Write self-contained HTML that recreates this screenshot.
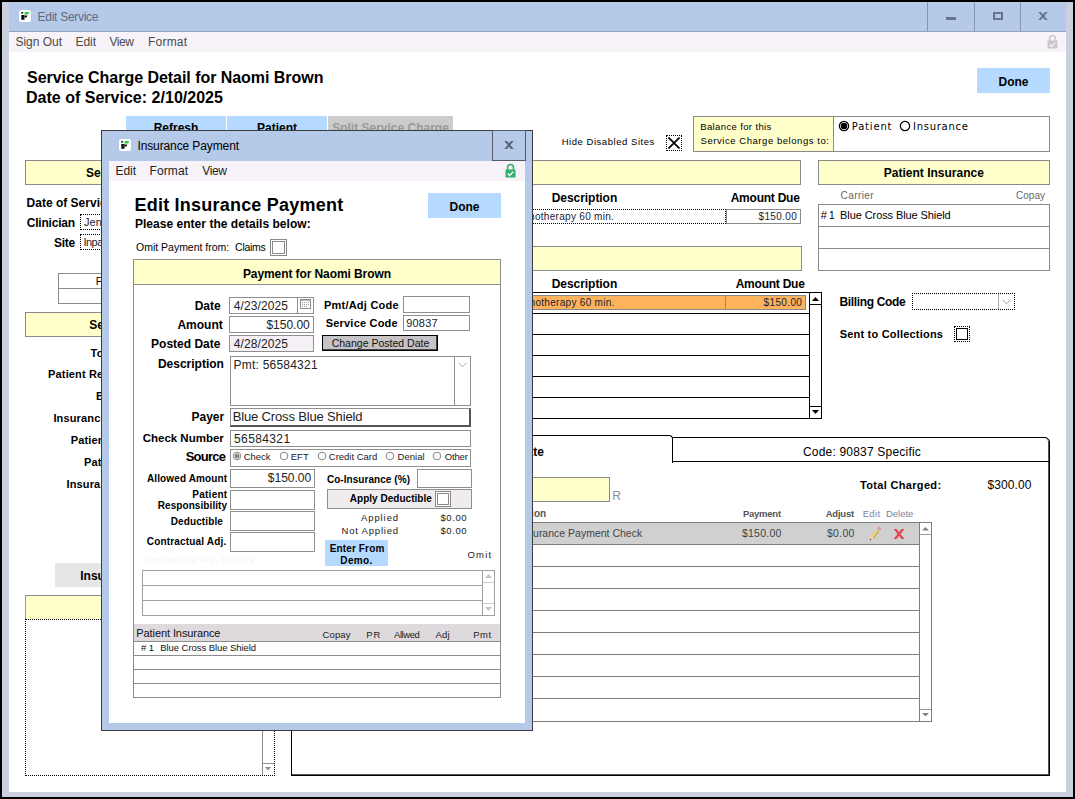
<!DOCTYPE html>
<html><head><meta charset="utf-8"><title>Edit Service</title>
<style>
html,body{margin:0;padding:0}
body{width:1075px;height:799px;position:relative;overflow:hidden;background:#000}
body>div{position:absolute}
.a{position:absolute}
.t{white-space:nowrap}
</style></head><body>
<div style="left:0px;top:0px;width:1075px;height:799px;background:#000"></div>
<div style="left:2px;top:2px;width:1071px;height:795px;background:#cbd0de"></div>
<div style="left:9px;top:2px;width:1057px;height:30px;background:#b5c9e8;border-bottom:1px solid #93a3c0;box-sizing:border-box"></div>
<div style="left:9px;top:32px;width:1057px;height:20px;background:#f8f3f8"></div>
<div style="left:9px;top:52px;width:1057px;height:740px;background:#fff"></div>
<svg class="a" style="left:19px;top:10px" width="12" height="12" viewBox="0 0 12 12"><rect width="12" height="12" rx="2.5" fill="#fff"/><path d="M2.3 2h2.2l-0.9 1.7h-1.3z" fill="#111"/><path d="M2.3 5h3.2v4.8h-3.2z" fill="#111"/><path d="M5.5 5.5h2.9l-0.9 2h-2z" fill="#111"/><path d="M5.9 1.9h4.4l-1.3 2.7h-3.6z" fill="#1fce3f"/></svg>
<div class="t" style="font:12px/16px 'Liberation Sans',sans-serif;color:#5f6b85;letter-spacing:-0.277px;left:37.54px;top:9.00px;">Edit Service</div>
<div style="left:927px;top:2px;width:1px;height:29px;background:#8797b3"></div>
<div style="left:974px;top:2px;width:1px;height:29px;background:#8797b3"></div>
<div style="left:1020px;top:2px;width:1px;height:29px;background:#8797b3"></div>
<div style="left:946px;top:17px;width:10px;height:3px;background:#65748f"></div>
<div style="left:993px;top:12px;width:10px;height:8px;border:2px solid #65748f;border-top-width:2px;box-sizing:border-box"></div>
<svg class="a" style="left:1035.4px;top:8px" width="16" height="16" viewBox="-8 -8 16 16"><clipPath id="xc1"><rect x="-8" y="-4" width="16" height="8"/></clipPath><path clip-path="url(#xc1)" d="M-5.10 -6.00L5.10 6.00M5.10 -6.00L-5.10 6.00" stroke="#65748f" stroke-width="2.0" fill="none"/></svg>
<svg class="a" style="left:1046.6px;top:34px" width="11" height="15" viewBox="0 0 11 15"><path d="M2.6 7V4.4a2.9 2.9 0 0 1 5.8 0V7" fill="none" stroke="#c9c9c9" stroke-width="1.6"/><rect x="0.5" y="6.5" width="10" height="8" fill="#c9c9c9"/><path d="M2.8 10.6l1.8 1.8 3.6-3.6" fill="none" stroke="#f4f0f4" stroke-width="1.4"/></svg>
<div class="t" style="font:12px/16px 'Liberation Sans',sans-serif;color:#4a4a4a;letter-spacing:-0.011px;left:15.46px;top:34.00px;">Sign Out</div>
<div class="t" style="font:12px/16px 'Liberation Sans',sans-serif;color:#4a4a4a;letter-spacing:-0.050px;left:75.54px;top:34.00px;">Edit</div>
<div class="t" style="font:12px/16px 'Liberation Sans',sans-serif;color:#4a4a4a;letter-spacing:-0.433px;left:109.47px;top:34.00px;">View</div>
<div class="t" style="font:12px/16px 'Liberation Sans',sans-serif;color:#4a4a4a;letter-spacing:0.202px;left:148.04px;top:34.00px;">Format</div>
<div class="t" style="font:bold 16px/19px 'Liberation Sans',sans-serif;color:#000;letter-spacing:-0.040px;left:27.06px;top:68.00px;">Service Charge Detail for Naomi Brown</div>
<div class="t" style="font:bold 16px/19px 'Liberation Sans',sans-serif;color:#000;letter-spacing:0.015px;left:25.96px;top:88.00px;">Date of Service: 2/10/2025</div>
<div style="left:977px;top:68px;width:73px;height:25px;background:#b5d9ff"></div>
<div class="t" style="font:bold 12px/16px 'Liberation Sans',sans-serif;color:#000;left:983.50px;width:60px;text-align:center;top:74.00px;">Done</div>
<div style="left:126px;top:116px;width:100px;height:26px;background:#b5d9ff"></div>
<div style="left:227px;top:116px;width:100px;height:26px;background:#b5d9ff"></div>
<div style="left:328px;top:116px;width:125px;height:26px;background:#ccc"></div>
<div class="t" style="font:bold 12px/16px 'Liberation Sans',sans-serif;color:#000;left:131.00px;width:90px;text-align:center;top:120.00px;">Refresh</div>
<div class="t" style="font:bold 12px/16px 'Liberation Sans',sans-serif;color:#000;left:232.00px;width:90px;text-align:center;top:120.00px;">Patient</div>
<div class="t" style="font:bold 12px/16px 'Liberation Sans',sans-serif;color:#999;left:328.50px;width:124px;text-align:center;top:120.00px;">Split Service Charge</div>
<div class="t" style="font:9.5px/13px 'Liberation Sans',sans-serif;color:#000;letter-spacing:0.543px;left:561.64px;top:135.00px;">Hide Disabled Sites</div>
<div style="left:666px;top:135px;width:16px;height:16px;border:1px dotted #000;box-sizing:border-box"></div>
<svg class="a" style="left:668px;top:137px" width="12" height="12" viewBox="0 0 12 12"><path d="M0.5 0.5L11.5 11.5M11.5 0.5L0.5 11.5" stroke="#000" stroke-width="1.7"/></svg>
<div style="left:693px;top:116px;width:357px;height:36px;border:1px solid #8a8a8a;box-sizing:border-box;background:#fff"></div>
<div style="left:694px;top:117px;width:140px;height:34px;background:#ffffcc;border-right:1px solid #8a8a8a;box-sizing:border-box"></div>
<div class="t" style="font:9.5px/13px 'Liberation Sans',sans-serif;color:#000;letter-spacing:0.374px;left:700.24px;top:120.00px;">Balance for this</div>
<div class="t" style="font:9.5px/13px 'Liberation Sans',sans-serif;color:#000;letter-spacing:0.548px;left:700.57px;top:134.00px;">Service Charge belongs to:</div>
<svg class="a" style="left:837.1px;top:118.9px" width="14" height="14" viewBox="-7 -7 14 14"><circle cx="0" cy="0" r="4.65" fill="#fff" stroke="#000" stroke-width="1.2"/><circle cx="0" cy="0" r="3.3" fill="#000"/></svg>
<svg class="a" style="left:897.9px;top:118.9px" width="14" height="14" viewBox="-7 -7 14 14"><circle cx="0" cy="0" r="4.65" fill="#fff" stroke="#000" stroke-width="1.2"/></svg>
<div class="t" style="font:10px/13px 'DejaVu Sans',sans-serif;color:#000;letter-spacing:0.829px;left:851.73px;top:120.00px;">Patient</div>
<div class="t" style="font:10px/13px 'DejaVu Sans',sans-serif;color:#000;letter-spacing:0.719px;left:913.02px;top:120.00px;">Insurance</div>
<div style="left:25px;top:160px;width:380px;height:25px;background:#ffffcc;border:1px solid #8a8a8a;box-sizing:border-box;"></div>
<div class="t" style="font:bold 12px/16px 'Liberation Sans',sans-serif;color:#000;left:86.07px;top:165.00px;">Service Details</div>
<div style="left:404px;top:160px;width:397px;height:25px;background:#ffffcc;border:1px solid #8a8a8a;box-sizing:border-box;"></div>
<div style="left:818px;top:160px;width:232px;height:25px;background:#ffffcc;border:1px solid #8a8a8a;box-sizing:border-box;"></div>
<div class="t" style="font:bold 12px/16px 'Liberation Sans',sans-serif;color:#000;letter-spacing:0.009px;left:883.72px;top:165.00px;">Patient Insurance</div>
<div class="t" style="font:bold 12px/16px 'Liberation Sans',sans-serif;color:#000;left:26.62px;top:195.00px;">Date of Service</div>
<div class="t" style="font:bold 12px/16px 'Liberation Sans',sans-serif;color:#000;letter-spacing:-0.226px;left:26.82px;top:215.00px;">Clinician</div>
<div style="left:80px;top:214px;width:150px;height:16px;border:1px dotted #000;box-sizing:border-box"></div>
<div class="t" style="font:11px/14px 'Liberation Sans',sans-serif;color:#223;left:84.03px;top:215.00px;">Jennifer Adams</div>
<div class="t" style="font:bold 12px/16px 'Liberation Sans',sans-serif;color:#000;letter-spacing:-0.257px;left:53.97px;top:235.00px;">Site</div>
<div style="left:80px;top:234px;width:150px;height:16px;border:1px dotted #000;box-sizing:border-box"></div>
<div class="t" style="font:11px/14px 'Liberation Sans',sans-serif;color:#223;letter-spacing:-0.500px;left:83.41px;top:235.00px;">Inpatient Facility</div>
<div style="left:58px;top:273px;width:200px;height:31px;border:1px solid #8a8a8a;box-sizing:border-box"></div>
<div style="left:58px;top:288px;width:200px;height:1px;background:#8a8a8a"></div>
<div class="t" style="font:10.5px/14px 'Liberation Sans',sans-serif;color:#000;left:95.86px;top:274.00px;">Fee</div>
<div style="left:25px;top:312px;width:380px;height:25px;background:#ffffcc;border:1px solid #8a8a8a;box-sizing:border-box;"></div>
<div class="t" style="font:bold 12px/16px 'Liberation Sans',sans-serif;color:#000;left:89.37px;top:317.00px;">Service Charge Balance</div>
<div class="t" style="font:bold 11px/14px 'Liberation Sans',sans-serif;color:#000;letter-spacing:0.150px;left:90.59px;top:346.00px;">Total Charged</div>
<div class="t" style="font:bold 11px/14px 'Liberation Sans',sans-serif;color:#000;letter-spacing:0.150px;left:48.08px;top:367.00px;">Patient Responsibility</div>
<div class="t" style="font:bold 11px/14px 'Liberation Sans',sans-serif;color:#000;letter-spacing:0.150px;left:95.98px;top:389.00px;">Balance</div>
<div class="t" style="font:bold 11px/14px 'Liberation Sans',sans-serif;color:#000;letter-spacing:0.150px;left:53.38px;top:411.00px;">Insurance Payments</div>
<div class="t" style="font:bold 11px/14px 'Liberation Sans',sans-serif;color:#000;letter-spacing:0.150px;left:70.78px;top:433.00px;">Patient Payments</div>
<div class="t" style="font:bold 11px/14px 'Liberation Sans',sans-serif;color:#000;letter-spacing:0.150px;left:83.98px;top:455.00px;">Patient Adjustments</div>
<div class="t" style="font:bold 11px/14px 'Liberation Sans',sans-serif;color:#000;letter-spacing:0.150px;left:66.48px;top:477.00px;">Insurance Adjustments</div>
<div style="left:55px;top:563px;width:150px;height:24px;background:#e6e6e6"></div>
<div class="t" style="font:bold 12px/16px 'Liberation Sans',sans-serif;color:#000;left:80.22px;top:568.00px;">Insurance Claims</div>
<div style="left:25px;top:595px;width:250px;height:25px;background:#ffffcc;border:1px solid #8a8a8a;box-sizing:border-box;border-bottom:1px dotted #000;border-left-color:#999;border-right-color:#999;"></div>
<div style="left:25px;top:619px;width:250px;height:157px;border:1px dotted #000;box-sizing:border-box"></div>
<div style="left:262px;top:620px;width:1px;height:155px;background:#8c8c8c"></div>
<div style="left:263px;top:763px;width:11px;height:1px;background:#8c8c8c"></div>
<svg class="a" style="left:265px;top:767.3px" width="6" height="4" viewBox="0 0 6 4"><path d="M0 0L3 3.6L6 0z" fill="#8a8a8a"/></svg>
<div class="t" style="font:bold 12px/16px 'Liberation Sans',sans-serif;color:#000;letter-spacing:-0.050px;left:551.72px;top:190.00px;">Description</div>
<div class="t" style="font:bold 12px/16px 'Liberation Sans',sans-serif;color:#000;letter-spacing:-0.236px;left:730.70px;top:190.00px;">Amount Due</div>
<div style="left:404px;top:209px;width:322px;height:15px;border:1px dotted #000;box-sizing:border-box"></div>
<div class="t" style="font:10px/13px 'Liberation Sans',sans-serif;color:#223;letter-spacing:0.300px;right:460.80px;text-align:right;top:210.00px;">Psychotherapy 60 min.</div>
<div style="left:726px;top:209px;width:75px;height:15px;border:1px solid #8a8a8a;box-sizing:border-box"></div>
<div class="t" style="font:10px/13px 'Liberation Sans',sans-serif;color:#223;letter-spacing:0.325px;left:758.60px;top:210.00px;">$150.00</div>
<div style="left:404px;top:246px;width:398px;height:25px;background:#ffffcc;border:1px solid #8a8a8a;box-sizing:border-box;"></div>
<div class="t" style="font:bold 12px/16px 'Liberation Sans',sans-serif;color:#000;letter-spacing:-0.050px;left:551.72px;top:276.00px;">Description</div>
<div class="t" style="font:bold 12px/16px 'Liberation Sans',sans-serif;color:#000;letter-spacing:-0.236px;left:735.70px;top:276.00px;">Amount Due</div>
<div style="left:404px;top:292px;width:418px;height:127px;border:1px solid #000;box-sizing:border-box;background:#fff"></div>
<div style="left:404px;top:313px;width:406px;height:1px;background:#000"></div>
<div style="left:404px;top:334px;width:406px;height:1px;background:#000"></div>
<div style="left:404px;top:355px;width:406px;height:1px;background:#000"></div>
<div style="left:404px;top:376px;width:406px;height:1px;background:#000"></div>
<div style="left:404px;top:397px;width:406px;height:1px;background:#000"></div>
<div style="left:809px;top:292px;width:1px;height:127px;background:#000"></div>
<div style="left:809px;top:304px;width:13px;height:1px;background:#000"></div>
<div style="left:809px;top:406px;width:13px;height:1px;background:#000"></div>
<svg class="a" style="left:811.5px;top:297px" width="7" height="4" viewBox="0 0 7 4"><path d="M0 4L3.5 0L7 4z" fill="#000"/></svg>
<svg class="a" style="left:811.5px;top:410px" width="7" height="4" viewBox="0 0 7 4"><path d="M0 0L3.5 4L7 0z" fill="#000"/></svg>
<div style="left:404px;top:295px;width:322px;height:15px;background:#fdb25c;border:1px solid #8a8a8a;box-sizing:border-box"></div>
<div style="left:725px;top:295px;width:81px;height:15px;background:#fdb25c;border:1px solid #8a8a8a;box-sizing:border-box"></div>
<div class="t" style="font:10px/13px 'Liberation Sans',sans-serif;color:#223;letter-spacing:0.300px;right:460.30px;text-align:right;top:296.00px;">Psychotherapy 60 min.</div>
<div class="t" style="font:10px/13px 'Liberation Sans',sans-serif;color:#223;letter-spacing:0.358px;left:763.60px;top:296.00px;">$150.00</div>
<div class="t" style="font:10px/13px 'Liberation Sans',sans-serif;color:#666;letter-spacing:0.433px;left:840.50px;top:189.00px;">Carrier</div>
<div class="t" style="font:10px/13px 'Liberation Sans',sans-serif;color:#666;letter-spacing:0.025px;left:1016.00px;top:189.00px;">Copay</div>
<div style="left:818px;top:204px;width:232px;height:67px;border:1px solid #8a8a8a;box-sizing:border-box"></div>
<div style="left:818px;top:226px;width:232px;height:1px;background:#8a8a8a"></div>
<div style="left:818px;top:248px;width:232px;height:1px;background:#8a8a8a"></div>
<div class="t" style="font:11px/14px 'Liberation Sans',sans-serif;color:#000;left:820.67px;top:208.00px;">#</div>
<div class="t" style="font:11px/14px 'Liberation Sans',sans-serif;color:#000;left:828.77px;top:208.00px;">1</div>
<div class="t" style="font:11px/14px 'Liberation Sans',sans-serif;color:#000;letter-spacing:-0.092px;left:840.12px;top:208.00px;">Blue Cross Blue Shield</div>
<div class="t" style="font:bold 12px/16px 'Liberation Sans',sans-serif;color:#000;letter-spacing:-0.329px;left:839.42px;top:294.00px;">Billing Code</div>
<div style="left:912px;top:293px;width:103px;height:17px;border:1px dotted #000;box-sizing:border-box"></div>
<div style="left:998px;top:294px;width:1px;height:15px;background:#aaa"></div>
<svg class="a" style="left:1002px;top:299px" width="9" height="6" viewBox="0 0 9 6"><path d="M0.5 0.8L4.5 4.8L8.5 0.8" fill="none" stroke="#999" stroke-width="1"/></svg>
<div class="t" style="font:bold 11px/14px 'Liberation Sans',sans-serif;color:#000;letter-spacing:0.201px;left:839.70px;top:327.00px;">Sent to Collections</div>
<div style="left:954px;top:326px;width:16px;height:16px;border:1px dotted #000;box-sizing:border-box"></div>
<div style="left:956px;top:328px;width:12px;height:12px;border:1px solid #000;box-sizing:border-box"></div>
<div style="left:291px;top:461px;width:759px;height:315px;border:1px solid #000;box-shadow:inset -1px -1px 0 0 #555;box-sizing:border-box;background:#fff"></div>
<div style="left:291px;top:435px;width:382px;height:28px;border:1px solid #000;border-bottom:none;border-radius:4px 4px 0 0;box-sizing:border-box;background:#fff"></div>
<div style="left:672px;top:437px;width:378px;height:25px;border:1px solid #000;box-shadow:inset -1px 0 0 0 #555;border-radius:0 5px 0 0;box-sizing:border-box;background:#fff"></div>
<div class="t" style="font:bold 12px/16px 'Liberation Sans',sans-serif;color:#000;right:531.18px;text-align:right;top:444.00px;">Payments and Adjustments to Date</div>
<div class="t" style="font:12px/16px 'Liberation Sans',sans-serif;color:#000;letter-spacing:0.201px;left:802.90px;top:444.00px;">Code: 90837 Specific</div>
<div style="left:430px;top:477px;width:180px;height:25px;background:#ffffcc;border:1px solid #8a8a8a;box-sizing:border-box"></div>
<div class="t" style="font:12px/16px 'Liberation Sans',sans-serif;color:#8a90a0;left:612.24px;top:488.00px;">R</div>
<div class="t" style="font:bold 11px/14px 'Liberation Sans',sans-serif;color:#000;letter-spacing:0.321px;left:860.09px;top:478.00px;">Total Charged:</div>
<div class="t" style="font:12px/16px 'Liberation Sans',sans-serif;color:#000;letter-spacing:0.120px;left:987.38px;top:477.00px;">$300.00</div>
<div class="t" style="font:bold 10px/13px 'Liberation Sans',sans-serif;color:#555;right:528.89px;text-align:right;top:507.00px;">Description</div>
<div class="t" style="font:bold 9.5px/13px 'Liberation Sans',sans-serif;color:#555;letter-spacing:-0.230px;left:742.88px;top:507.00px;">Payment</div>
<div class="t" style="font:bold 9.5px/13px 'Liberation Sans',sans-serif;color:#555;letter-spacing:-0.242px;left:825.76px;top:507.00px;">Adjust</div>
<div class="t" style="font:9.5px/13px 'Liberation Sans',sans-serif;color:#7a86a0;letter-spacing:0.348px;left:862.64px;top:507.00px;">Edit</div>
<div class="t" style="font:9.5px/13px 'Liberation Sans',sans-serif;color:#7a86a0;left:885.94px;top:507.00px;">Delete</div>
<div style="left:300px;top:522px;width:632px;height:200px;border:1px solid #7f7f7f;box-sizing:border-box;background:#fff"></div>
<div style="left:301px;top:523px;width:618px;height:21px;background:#d0d0d0"></div>
<div style="left:300px;top:544px;width:620px;height:1px;background:#7f7f7f"></div>
<div style="left:300px;top:566px;width:620px;height:1px;background:#7f7f7f"></div>
<div style="left:300px;top:588px;width:620px;height:1px;background:#7f7f7f"></div>
<div style="left:300px;top:610px;width:620px;height:1px;background:#7f7f7f"></div>
<div style="left:300px;top:632px;width:620px;height:1px;background:#7f7f7f"></div>
<div style="left:300px;top:654px;width:620px;height:1px;background:#7f7f7f"></div>
<div style="left:300px;top:676px;width:620px;height:1px;background:#7f7f7f"></div>
<div style="left:300px;top:698px;width:620px;height:1px;background:#7f7f7f"></div>
<div style="left:919px;top:522px;width:1px;height:200px;background:#7f7f7f"></div>
<div style="left:920px;top:534px;width:11px;height:1px;background:#999"></div>
<div style="left:920px;top:709px;width:11px;height:1px;background:#999"></div>
<svg class="a" style="left:922px;top:527.3px" width="7" height="4" viewBox="0 0 7 4"><path d="M0 3.6L3.5 0L7 3.6z" fill="#808080"/></svg>
<svg class="a" style="left:922px;top:713.2px" width="7" height="4" viewBox="0 0 7 4"><path d="M0 0L3.5 3.6L7 0z" fill="#808080"/></svg>
<div class="t" style="font:10.5px/14px 'Liberation Sans',sans-serif;color:#444;right:432.82px;text-align:right;top:526.00px;">Insurance Payment Check</div>
<div class="t" style="font:10.5px/14px 'Liberation Sans',sans-serif;color:#444;letter-spacing:0.261px;left:741.89px;top:526.00px;">$150.00</div>
<div class="t" style="font:10.5px/14px 'Liberation Sans',sans-serif;color:#444;letter-spacing:0.306px;left:826.89px;top:526.00px;">$0.00</div>
<svg class="a" style="left:866.5px;top:525.9px" width="16" height="16" viewBox="-8 -8 16 16"><g transform="rotate(38)"><rect x="-2" y="-8.2" width="4" height="2.2" rx="0.8" fill="#e8948c"/><rect x="-2" y="-6.2" width="4" height="1.6" fill="#b9b9b9"/><rect x="-2" y="-4.6" width="4" height="9" fill="#e9cf86"/><rect x="0.7" y="-4.6" width="1.3" height="9" fill="#c7a85c"/><path d="M-2 4.4h4l-2 3.9z" fill="#ead9b0"/><path d="M-0.8 6.8h1.6l-0.8 1.6z" fill="#333"/></g></svg>
<svg class="a" style="left:891.2px;top:526.2px" width="16" height="16" viewBox="-8 -8 16 16"><clipPath id="xc2"><rect x="-8" y="-4.9" width="16" height="9.8"/></clipPath><path clip-path="url(#xc2)" d="M-5.49 -6.90L5.49 6.90M5.49 -6.90L-5.49 6.90" stroke="#e2454b" stroke-width="2.3" fill="none"/></svg>
<div style="left:101px;top:130px;width:432px;height:601px;background:#b5c9e8;border:1px solid #3c3c3c;box-sizing:border-box"></div>
<div style="left:109px;top:161px;width:416px;height:20px;background:#f8f3f8"></div>
<div style="left:109px;top:181px;width:416px;height:542px;background:#fff"></div>
<svg class="a" style="left:119px;top:139px" width="12" height="12" viewBox="0 0 12 12"><rect width="12" height="12" rx="2.5" fill="#fff"/><path d="M2.3 2h2.2l-0.9 1.7h-1.3z" fill="#111"/><path d="M2.3 5h3.2v4.8h-3.2z" fill="#111"/><path d="M5.5 5.5h2.9l-0.9 2h-2z" fill="#111"/><path d="M5.9 1.9h4.4l-1.3 2.7h-3.6z" fill="#1fce3f"/></svg>
<div class="t" style="font:12px/16px 'Liberation Sans',sans-serif;color:#000;letter-spacing:-0.109px;left:137.42px;top:138.00px;">Insurance Payment</div>
<div style="left:492px;top:130px;width:34px;height:31px;border:1px solid #555c66;box-sizing:border-box"></div>
<svg class="a" style="left:501.0px;top:136.9px" width="16" height="16" viewBox="-8 -8 16 16"><clipPath id="xc3"><rect x="-8" y="-4.1" width="16" height="8.2"/></clipPath><path clip-path="url(#xc3)" d="M-5.06 -6.10L5.06 6.10M5.06 -6.10L-5.06 6.10" stroke="#555f70" stroke-width="2.0" fill="none"/></svg>
<div class="t" style="font:12px/16px 'Liberation Sans',sans-serif;color:#222;letter-spacing:-0.050px;left:115.54px;top:163.00px;">Edit</div>
<div class="t" style="font:12px/16px 'Liberation Sans',sans-serif;color:#222;letter-spacing:0.102px;left:149.54px;top:163.00px;">Format</div>
<div class="t" style="font:12px/16px 'Liberation Sans',sans-serif;color:#222;letter-spacing:-0.367px;left:202.27px;top:163.00px;">View</div>
<svg class="a" style="left:504.8px;top:162.7px" width="11" height="15" viewBox="0 0 11 15"><path d="M2.6 7V4.4a2.9 2.9 0 0 1 5.8 0V7" fill="none" stroke="#30b26e" stroke-width="1.6"/><rect x="0.5" y="6.5" width="10" height="8" fill="#30b26e"/><path d="M2.8 10.6l1.8 1.8 3.6-3.6" fill="none" stroke="#fff" stroke-width="1.4"/></svg>
<div class="t" style="font:bold 18px/22px 'Liberation Sans',sans-serif;color:#000;letter-spacing:0.218px;left:134.53px;top:194.00px;">Edit Insurance Payment</div>
<div class="t" style="font:bold 12px/16px 'Liberation Sans',sans-serif;color:#000;letter-spacing:0.033px;left:134.92px;top:216.00px;">Please enter the details below:</div>
<div style="left:428px;top:193px;width:73px;height:25px;background:#b5d9ff"></div>
<div class="t" style="font:bold 12px/16px 'Liberation Sans',sans-serif;color:#000;left:434.50px;width:60px;text-align:center;top:199.00px;">Done</div>
<div class="t" style="font:10.5px/14px 'Liberation Sans',sans-serif;color:#000;letter-spacing:-0.007px;left:136.03px;top:240.00px;">Omit Payment from:</div>
<div class="t" style="font:10.5px/14px 'Liberation Sans',sans-serif;color:#000;letter-spacing:-0.257px;left:235.07px;top:240.00px;">Claims</div>
<div style="left:270px;top:239px;width:17px;height:17px;border:1px solid #8a8a8a;box-sizing:border-box;background:#fff"></div>
<div style="left:272px;top:241px;width:13px;height:13px;border:1px solid #8a8a8a;box-sizing:border-box;background:#fff"></div>
<div style="left:133px;top:259px;width:368px;height:439px;border:1px solid #8c8c8c;box-sizing:border-box;background:#fff"></div>
<div style="left:134px;top:260px;width:366px;height:24px;background:#ffffcc;border-bottom:1px solid #8c8c8c"></div>
<div class="t" style="font:bold 12px/16px 'Liberation Sans',sans-serif;color:#000;letter-spacing:-0.088px;left:242.92px;top:266.00px;">Payment for Naomi Brown</div>
<div class="t" style="font:bold 12px/16px 'Liberation Sans',sans-serif;color:#000;right:854.31px;text-align:right;top:298.00px;">Date</div>
<div style="left:229px;top:297px;width:85px;height:17px;border:1px solid #8f8f8f;box-sizing:border-box;background:#fff;"></div>
<div style="left:297px;top:298px;width:1px;height:15px;background:#8f8f8f"></div>
<div class="t" style="font:12px/16px 'Liberation Sans',sans-serif;color:#222;letter-spacing:0.110px;left:233.73px;top:298.00px;">4/23/2025</div>
<svg class="a" style="left:300px;top:299px" width="11" height="10" viewBox="0 0 11 10"><rect x="0.5" y="0.5" width="10" height="9" fill="#fff" stroke="#8a8a8a"/><rect x="0" y="0" width="11" height="1.6" fill="#8a8a8a"/><g fill="#9a9a9a"><rect x="2" y="3" width="1" height="1"/><rect x="4" y="3" width="1" height="1"/><rect x="6" y="3" width="1" height="1"/><rect x="8" y="3" width="1" height="1"/><rect x="2" y="5" width="1" height="1"/><rect x="4" y="5" width="1" height="1"/><rect x="6" y="5" width="1" height="1"/><rect x="8" y="5" width="1" height="1"/><rect x="2" y="7" width="1" height="1"/><rect x="4" y="7" width="1" height="1"/><rect x="6" y="7" width="1" height="1"/></g></svg>
<div class="t" style="font:bold 12px/16px 'Liberation Sans',sans-serif;color:#000;right:852.29px;text-align:right;top:317.00px;">Amount</div>
<div style="left:229px;top:316px;width:85px;height:17px;border:1px solid #8f8f8f;box-sizing:border-box;background:#fff;"></div>
<div class="t" style="font:12px/16px 'Liberation Sans',sans-serif;color:#222;right:765.22px;text-align:right;top:317.00px;">$150.00</div>
<div class="t" style="font:bold 12px/16px 'Liberation Sans',sans-serif;color:#000;right:854.59px;text-align:right;top:336.00px;">Posted Date</div>
<div style="left:229px;top:335px;width:85px;height:17px;border:1px solid #8f8f8f;box-sizing:border-box;background:#f5f0f5;"></div>
<div class="t" style="font:12px/16px 'Liberation Sans',sans-serif;color:#222;letter-spacing:0.110px;left:233.73px;top:336.00px;">4/28/2025</div>
<div class="t" style="font:bold 12px/16px 'Liberation Sans',sans-serif;color:#000;right:851.07px;text-align:right;top:356.00px;">Description</div>
<div style="left:230px;top:356px;width:241px;height:50px;border:1px solid #8f8f8f;box-sizing:border-box;background:#fff;"></div>
<div style="left:454px;top:357px;width:1px;height:48px;background:#8f8f8f"></div>
<svg class="a" style="left:458px;top:362px" width="9" height="6" viewBox="0 0 9 6"><path d="M0.5 0.8L4.5 4.8L8.5 0.8" fill="none" stroke="#aaa" stroke-width="1"/></svg>
<div class="t" style="font:12px/16px 'Liberation Sans',sans-serif;color:#222;letter-spacing:0.220px;left:233.54px;top:357.00px;">Pmt: 56584321</div>
<div class="t" style="font:bold 11px/14px 'Liberation Sans',sans-serif;color:#000;letter-spacing:0.242px;left:323.89px;top:298.00px;">Pmt/Adj Code</div>
<div style="left:403px;top:296px;width:67px;height:17px;border:1px solid #8f8f8f;box-sizing:border-box;background:#fff;"></div>
<div class="t" style="font:bold 11px/14px 'Liberation Sans',sans-serif;color:#000;letter-spacing:0.207px;left:325.70px;top:316.00px;">Service Code</div>
<div style="left:403px;top:315px;width:67px;height:16px;border:1px solid #8f8f8f;box-sizing:border-box;background:#fff;"></div>
<div class="t" style="font:11px/14px 'Liberation Sans',sans-serif;color:#222;letter-spacing:0.159px;left:406.31px;top:316.00px;">90837</div>
<div style="left:322px;top:335px;width:116px;height:16px;border:1px solid #000;box-shadow:inset -1px -1px 0 0 #444;box-sizing:border-box;background:#c6c3c6"></div>
<div class="t" style="font:10.5px/14px 'Liberation Sans',sans-serif;color:#111;letter-spacing:0.006px;left:331.68px;top:336.00px;">Change Posted Date</div>
<div class="t" style="font:bold 12px/16px 'Liberation Sans',sans-serif;color:#000;right:850.82px;text-align:right;top:409.00px;">Payer</div>
<div style="left:230px;top:408px;width:241px;height:19px;border:1px solid #8f8f8f;box-sizing:border-box;background:#fff;border-right:2px solid #555;border-bottom:2px solid #555;"></div>
<div class="t" style="font:13px/17px 'Liberation Sans',sans-serif;color:#222;letter-spacing:-0.157px;left:232.76px;top:408.00px;">Blue Cross Blue Shield</div>
<div class="t" style="font:bold 11.5px/14px 'Liberation Sans',sans-serif;color:#000;letter-spacing:-0.012px;left:142.74px;top:431.00px;">Check Number</div>
<div style="left:230px;top:430px;width:241px;height:17px;border:1px solid #8f8f8f;box-sizing:border-box;background:#fff;"></div>
<div class="t" style="font:12px/16px 'Liberation Sans',sans-serif;color:#222;letter-spacing:0.383px;left:234.02px;top:431.00px;">56584321</div>
<div class="t" style="font:bold 13px/17px 'Liberation Sans',sans-serif;color:#000;letter-spacing:-0.758px;left:185.64px;top:448.00px;">Source</div>
<div style="left:230px;top:449px;width:241px;height:18px;border:1px solid #8f8f8f;box-sizing:border-box;background:#fff;"></div>
<svg class="a" style="left:229.5px;top:449.2px" width="14" height="14" viewBox="-7 -7 14 14"><circle cx="0" cy="0" r="3.8" fill="#fff" stroke="#777" stroke-width="0.9"/><circle cx="0" cy="0" r="2.5" fill="#8a8a8a"/></svg>
<div class="t" style="font:9.5px/13px 'Liberation Sans',sans-serif;color:#222;letter-spacing:-0.045px;left:243.72px;top:450.00px;">Check</div>
<svg class="a" style="left:276.7px;top:449.2px" width="14" height="14" viewBox="-7 -7 14 14"><circle cx="0" cy="0" r="3.8" fill="#fff" stroke="#777" stroke-width="0.9"/></svg>
<div class="t" style="font:9.5px/13px 'Liberation Sans',sans-serif;color:#222;letter-spacing:0.009px;left:290.74px;top:450.00px;">EFT</div>
<svg class="a" style="left:314.5px;top:449.2px" width="14" height="14" viewBox="-7 -7 14 14"><circle cx="0" cy="0" r="3.8" fill="#fff" stroke="#777" stroke-width="0.9"/></svg>
<div class="t" style="font:9.5px/13px 'Liberation Sans',sans-serif;color:#222;letter-spacing:-0.010px;left:328.82px;top:450.00px;">Credit Card</div>
<svg class="a" style="left:383.3px;top:449.2px" width="14" height="14" viewBox="-7 -7 14 14"><circle cx="0" cy="0" r="3.8" fill="#fff" stroke="#777" stroke-width="0.9"/></svg>
<div class="t" style="font:9.5px/13px 'Liberation Sans',sans-serif;color:#222;letter-spacing:0.029px;left:397.54px;top:450.00px;">Denial</div>
<svg class="a" style="left:430.3px;top:449.2px" width="14" height="14" viewBox="-7 -7 14 14"><circle cx="0" cy="0" r="3.8" fill="#fff" stroke="#777" stroke-width="0.9"/></svg>
<div class="t" style="font:9.5px/13px 'Liberation Sans',sans-serif;color:#222;letter-spacing:-0.170px;left:444.77px;top:450.00px;">Other</div>
<div class="t" style="font:bold 10px/13px 'Liberation Sans',sans-serif;color:#000;letter-spacing:0.127px;left:146.95px;top:472.00px;">Allowed Amount</div>
<div style="left:230px;top:469px;width:85px;height:19px;border:1px solid #8f8f8f;box-sizing:border-box;background:#fff;"></div>
<div class="t" style="font:12px/16px 'Liberation Sans',sans-serif;color:#222;right:763.82px;text-align:right;top:470.00px;">$150.00</div>
<div class="t" style="font:bold 10px/13px 'Liberation Sans',sans-serif;color:#000;letter-spacing:0.237px;left:192.35px;top:488.00px;">Patient</div>
<div class="t" style="font:bold 10px/13px 'Liberation Sans',sans-serif;color:#000;letter-spacing:0.073px;left:157.75px;top:499.00px;">Responsibility</div>
<div style="left:230px;top:490px;width:85px;height:20px;border:1px solid #8f8f8f;box-sizing:border-box;background:#fff;"></div>
<div class="t" style="font:bold 10px/13px 'Liberation Sans',sans-serif;color:#000;letter-spacing:0.108px;left:170.75px;top:515.00px;">Deductible</div>
<div style="left:230px;top:511px;width:85px;height:20px;border:1px solid #8f8f8f;box-sizing:border-box;background:#fff;"></div>
<div class="t" style="font:bold 10px/13px 'Liberation Sans',sans-serif;color:#000;letter-spacing:0.168px;left:146.80px;top:535.00px;">Contractual Adj.</div>
<div style="left:230px;top:532px;width:85px;height:20px;border:1px solid #8f8f8f;box-sizing:border-box;background:#fff;"></div>
<div class="t" style="font:bold 10px/13px 'Liberation Sans',sans-serif;color:#000;letter-spacing:0.057px;left:326.90px;top:473.00px;">Co-Insurance (%)</div>
<div style="left:417px;top:469px;width:55px;height:19px;border:1px solid #8f8f8f;box-sizing:border-box;background:#fff;"></div>
<div style="left:327px;top:489px;width:145px;height:20px;border:1px solid #8f8f8f;box-sizing:border-box;background:#efebef"></div>
<div class="t" style="font:bold 10px/13px 'Liberation Sans',sans-serif;color:#000;letter-spacing:0.027px;left:349.75px;top:492.00px;">Apply Deductible</div>
<div style="left:435px;top:491px;width:16px;height:16px;border:1px solid #8a8a8a;box-sizing:border-box;background:#fff"></div>
<div style="left:437px;top:493px;width:12px;height:12px;border:1px solid #8a8a8a;box-sizing:border-box;background:#fff"></div>
<div class="t" style="font:9.5px/13px 'Liberation Sans',sans-serif;color:#222;letter-spacing:0.902px;left:361.00px;top:511.00px;">Applied</div>
<div class="t" style="font:9.5px/13px 'Liberation Sans',sans-serif;color:#222;letter-spacing:0.796px;left:341.54px;top:524.00px;">Not Applied</div>
<div class="t" style="font:9.5px/13px 'Liberation Sans',sans-serif;color:#222;letter-spacing:0.619px;left:440.40px;top:511.00px;">$0.00</div>
<div class="t" style="font:9.5px/13px 'Liberation Sans',sans-serif;color:#222;letter-spacing:0.619px;left:440.40px;top:524.00px;">$0.00</div>
<div style="left:325px;top:540px;width:63px;height:26px;background:#b5d9ff"></div>
<div class="t" style="font:bold 10px/13px 'Liberation Sans',sans-serif;color:#000;letter-spacing:0.147px;left:329.65px;top:542.00px;">Enter From</div>
<div class="t" style="font:bold 10px/13px 'Liberation Sans',sans-serif;color:#000;letter-spacing:0.319px;left:340.35px;top:554.00px;">Demo.</div>
<div class="t" style="font:9.5px/13px 'Liberation Sans',sans-serif;color:#222;letter-spacing:1.143px;left:467.57px;top:548.00px;">Omit</div>
<div class="t" style="font:9px/12px 'Liberation Sans',sans-serif;color:#f6f2f8;letter-spacing:0.770px;left:142.35px;top:554.00px;">Contractual Adj. Details</div>
<div style="left:142px;top:570px;width:353px;height:46px;border:1px solid #a0a0a0;box-sizing:border-box;background:#fff"></div>
<div style="left:142px;top:585px;width:341px;height:1px;background:#a0a0a0"></div>
<div style="left:142px;top:600px;width:341px;height:1px;background:#a0a0a0"></div>
<div style="left:482px;top:570px;width:1px;height:46px;background:#a0a0a0"></div>
<div style="left:483px;top:582px;width:11px;height:1px;background:#ccc"></div>
<div style="left:483px;top:603px;width:11px;height:1px;background:#ccc"></div>
<svg class="a" style="left:485px;top:574px" width="7" height="4" viewBox="0 0 7 4"><path d="M0 4L3.5 0L7 4z" fill="#c4c4c4"/></svg>
<svg class="a" style="left:485px;top:607px" width="7" height="4" viewBox="0 0 7 4"><path d="M0 0L3.5 4L7 0z" fill="#c4c4c4"/></svg>
<div style="left:134px;top:624px;width:366px;height:17px;background:#ddd9dd"></div>
<div class="t" style="font:11px/14px 'Liberation Sans',sans-serif;color:#111;letter-spacing:-0.091px;left:136.32px;top:626.00px;">Patient Insurance</div>
<div class="t" style="font:9.5px/13px 'Liberation Sans',sans-serif;color:#222;letter-spacing:0.130px;left:322.52px;top:628.00px;">Copay</div>
<div class="t" style="font:9.5px/13px 'Liberation Sans',sans-serif;color:#222;letter-spacing:0.982px;left:366.24px;top:628.00px;">PR</div>
<div class="t" style="font:9.5px/13px 'Liberation Sans',sans-serif;color:#222;letter-spacing:-0.417px;left:394.00px;top:628.00px;">Allwed</div>
<div class="t" style="font:9.5px/13px 'Liberation Sans',sans-serif;color:#222;letter-spacing:0.257px;left:435.40px;top:628.00px;">Adj</div>
<div class="t" style="font:9.5px/13px 'Liberation Sans',sans-serif;color:#222;letter-spacing:0.461px;left:473.24px;top:628.00px;">Pmt</div>
<div style="left:134px;top:641px;width:366px;height:1px;background:#8c8c8c"></div>
<div style="left:134px;top:655px;width:366px;height:1px;background:#8c8c8c"></div>
<div style="left:134px;top:669px;width:366px;height:1px;background:#8c8c8c"></div>
<div style="left:134px;top:683px;width:366px;height:1px;background:#8c8c8c"></div>
<div class="t" style="font:9.5px/13px 'Liberation Sans',sans-serif;color:#111;letter-spacing:-0.115px;left:140.98px;top:641.00px;"># 1</div>
<div class="t" style="font:9.5px/13px 'Liberation Sans',sans-serif;color:#111;letter-spacing:-0.062px;left:160.24px;top:641.00px;">Blue Cross Blue Shield</div>
</body></html>
